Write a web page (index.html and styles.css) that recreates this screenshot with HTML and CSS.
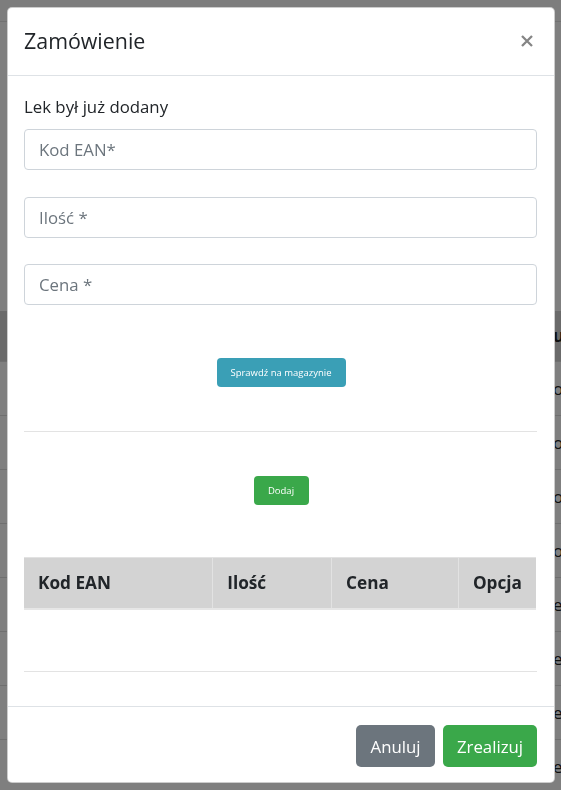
FILE: index.html
```html
<!DOCTYPE html>
<html lang="pl">
<head>
<meta charset="utf-8">
<title>Zamówienie</title>
<link rel="stylesheet" href="styles.css">
</head>
<body>
<div class="page">
  <div class="topbar"></div>
  <table class="bg-table">
    <thead><tr><th class="bg-main"></th><th class="bg-side">u</th></tr></thead>
    <tbody>
      <tr><td class="bg-main"></td><td class="bg-side">o</td></tr>
      <tr><td class="bg-main"></td><td class="bg-side">o</td></tr>
      <tr><td class="bg-main"></td><td class="bg-side">o</td></tr>
      <tr><td class="bg-main"></td><td class="bg-side">o</td></tr>
      <tr><td class="bg-main"></td><td class="bg-side">e</td></tr>
      <tr><td class="bg-main"></td><td class="bg-side">e</td></tr>
      <tr><td class="bg-main"></td><td class="bg-side">e</td></tr>
      <tr><td class="bg-main"></td><td class="bg-side">e</td></tr>
    </tbody>
  </table>
</div>
<div class="backdrop"></div>
<div class="modal">
  <div class="modal-header">
    <h5 class="modal-title">Zamówienie</h5>
    <button class="close" type="button" aria-label="Close">
      <svg width="12" height="12" viewBox="0 0 12 12"><path d="M1 1 L11 11 M11 1 L1 11" stroke="#858585" stroke-width="2.3" stroke-linecap="butt" fill="none"/></svg>
    </button>
  </div>
  <div class="modal-body">
    <p class="info">Lek był już dodany</p>
    <div class="fields">
      <input class="form-control" type="text" placeholder="Kod EAN*">
      <input class="form-control" type="text" placeholder="Ilość *">
      <input class="form-control" type="text" placeholder="Cena *">
    </div>
    <div class="center check-row"><button class="btn-sm btn-info" type="button">Sprawdź na magazynie</button></div>
    <hr class="divider">
    <div class="center add-row"><button class="btn-sm btn-success" type="button">Dodaj</button></div>
    <table class="items">
      <thead>
        <tr><th class="c1">Kod EAN</th><th class="c2">Ilość</th><th class="c3">Cena</th><th class="c4">Opcja</th></tr>
      </thead>
    </table>
    <hr class="divider table-end">
  </div>
  <div class="modal-footer">
    <button class="btn btn-secondary" type="button">Anuluj</button>
    <button class="btn btn-success" type="button">Zrealizuj</button>
  </div>
</div>
</body>
</html>
```

FILE: styles.css
```css
* { box-sizing: border-box; }
html, body { margin: 0; padding: 0; }
body {
  width: 561px;
  height: 790px;
  overflow: hidden;
  font-family: "Open Sans", "Noto Sans", sans-serif;
  color: #212529;
  background: #fff;
}
.page { height: 790px; overflow: hidden; }
.topbar { height: 22px; border-bottom: 1px solid #e2e2e2; background: #fafafa; }
.bg-table { border-collapse: collapse; margin-top: 289px; width: 600px; }
.bg-table th, .bg-table td {
  padding: 0;
  height: 54px;
  border-bottom: 1px solid #dedede;
  text-align: left;
  font-size: 17px;
}
.bg-table thead th { height: 50px; background: #d4d4d4; font-weight: 700; }
.bg-main { width: 553px; }
.bg-side { color: #222; }
.backdrop {
  position: fixed;
  inset: 0;
  background: rgba(0, 0, 0, 0.5);
}
.modal {
  position: absolute;
  left: 7px;
  top: 7px;
  width: 548px;
  height: 776px;
  background: #fff;
  border: 1px solid rgba(0, 0, 0, 0.2);
  border-radius: 5px;
  display: flex;
  flex-direction: column;
  overflow: hidden;
}
.modal-header {
  height: 68px;
  flex: none;
  padding: 0 21px 0 16px;
  display: flex;
  align-items: center;
  justify-content: space-between;
  border-bottom: 1px solid #dee2e6;
}
.modal-title {
  margin: 0;
  font-size: 21.4px;
  font-weight: 500;
  line-height: 1.5;
  color: #212529;
  padding-bottom: 1px;
}
.close {
  border: 0;
  background: transparent;
  padding: 0;
  width: 12px;
  height: 12px;
  display: flex;
  margin-bottom: 2px;
}
.modal-body {
  flex: 1;
  padding: 0 16px;
}
.info {
  margin: 19px 0 0;
  font-size: 16.8px;
  line-height: 24px;
}
.fields {
  margin-top: 10px;
  display: flex;
  flex-direction: column;
  gap: 26.5px;
}
.form-control {
  display: block;
  width: 513px;
  height: 41px;
  padding: 0 14px;
  font-family: "Open Sans", "Noto Sans", sans-serif;
  font-size: 16.8px;
  color: #495057;
  border: 1px solid #ced4da;
  border-radius: 4px;
  background: #fff;
  margin: 0;
  outline: none;
}
.form-control::placeholder { color: #6c757d; opacity: 1; }
.center { display: flex; justify-content: center; }
.check-row { margin-top: 53px; }
.btn-sm {
  height: 29px;
  border: 0;
  border-radius: 4px;
  color: #fff;
  font-family: "Open Sans", "Noto Sans", sans-serif;
  font-size: 9.5px;
  padding: 0;
  margin: 0;
  white-space: nowrap;
}
.btn-info { background: #3a9fb6; width: 129px; }
.add-row .btn-success { width: 55px; }
.divider {
  margin: 44px 0 0;
  border: 0;
  border-top: 1px solid #e3e3e3;
  width: 513px;
}
.add-row { margin-top: 44px; }
.items {
  margin-top: 52px;
  width: 512px;
  border-collapse: collapse;
}
.items th {
  height: 51px;
  background: #d3d3d3;
  border: 1px solid #e2e2e2;
  border-bottom: 2px solid #e6e6e6;
  text-align: left;
  padding: 0 14px;
  font-size: 17.2px;
  font-weight: 700;
  color: #212529;
}
.items .c1 { width: 189px; }
.items .c2 { width: 119px; }
.items .c3 { width: 127px; }
.items .c4 { width: 77px; }
.items th:first-child { border-left: 0; }
.items th:last-child { border-right: 0; }
.table-end { margin-top: 61px; }
.modal-footer {
  flex: none;
  height: 76px;
  border-top: 1px solid #dee2e6;
  padding: 18px 17px 0 0;
  display: flex;
  justify-content: flex-end;
  align-items: flex-start;
  gap: 8px;
}
.btn {
  height: 42px;
  border: 0;
  border-radius: 5px;
  color: #fff;
  font-family: "Open Sans", "Noto Sans", sans-serif;
  font-size: 16.8px;
  margin: 0;
}
.btn-secondary { background: #6c757d; width: 79px; }
.btn-success { background: #3aa84a; }
.modal-footer .btn-success { width: 94px; }
```
